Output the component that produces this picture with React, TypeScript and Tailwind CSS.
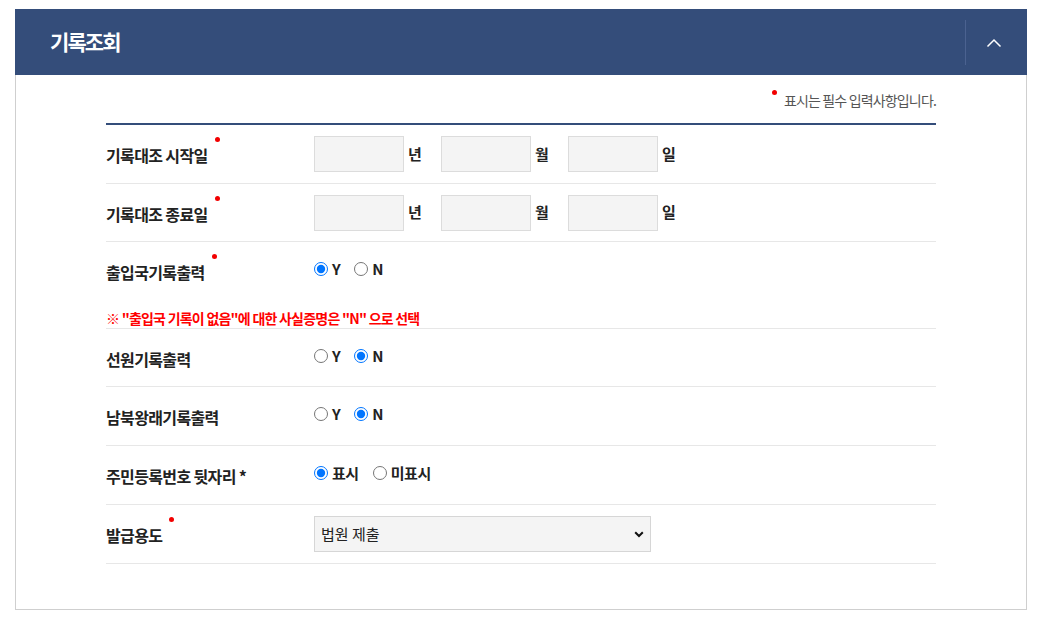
import React from 'react';

const font = { fontFamily: '"Noto Sans CJK KR", "Noto Sans", sans-serif' };

const Dot = ({ className = '' }: { className?: string }) => (
  <span className={`absolute w-[5px] h-[5px] rounded-full bg-[#f20000] ${className}`} />
);

const Label = ({ text, req }: { text: string; req?: boolean }) => (
  <span className="relative text-[16px] leading-[22px] font-bold text-[#222] tracking-[-0.04em]">
    {text}
    {req && <Dot className="-right-[12px] top-[-6px]" />}
  </span>
);

const Row = ({ label, req, h = 'h-[59px]', children }: { label: string; req?: boolean; h?: string; children: React.ReactNode }) => (
  <div className={`flex items-center ${h} border-b border-[#e7e7e7]`}>
    <div className="w-[208px] shrink-0 pt-[2px]">
      <Label text={label} req={req} />
    </div>
    <div className="flex items-center">{children}</div>
  </div>
);

const DateBox = ({ unit }: { unit: string }) => (
  <div className="flex items-center">
    <input className="w-[90px] h-[36px] bg-[#f4f4f4] border border-[#dcdcdc] outline-none" />
    <span className="w-[37px] pl-[4px] text-[15px] font-bold text-[#222]">{unit}</span>
  </div>
);

const Radio = ({ name, label, checked }: { name: string; label: string; checked?: boolean }) => (
  <label className="flex items-center mr-[14px] mb-[4px]">
    <input type="radio" name={name} defaultChecked={checked} className="m-0 w-[14px] h-[14px]" />
    <span className="ml-[4px] text-[15px] font-bold text-[#222] leading-[20px] tracking-[-0.03em]">{label}</span>
  </label>
);

export default function App() {
  return (
    <div className="bg-white min-h-screen pt-[9px] px-[15px]" style={font}>
      <div className="w-[1012px]">
        <div className="flex items-center justify-between h-[66px] bg-[#344d7a]">
          <h1 className="pl-[35px] text-white text-[21px] font-bold tracking-[-0.09em]">기록조회</h1>
          <div className="flex items-center justify-center w-[62px] h-[45px] border-l border-[#4b6290] mt-[11px] mb-[10px] pr-[6px]">
            <svg width="16" height="10" viewBox="0 0 16 10" className="mt-[0px]">
              <polyline points="1.5,8.5 8,2 14.5,8.5" fill="none" stroke="#fff" strokeWidth="1.5" />
            </svg>
          </div>
        </div>

        <div className="border border-t-0 border-[#cfcfcf] px-[90px] pb-[45px]">
          <div className="flex justify-end pt-[15px] pb-[13px]">
            <span className="relative text-[14px] leading-[20px] text-[#555] tracking-[-0.06em]">
              <Dot className="-left-[12px] top-[0px]" />
              표시는 필수 입력사항입니다.
            </span>
          </div>
          <div className="h-[2px] bg-[#344d7a]" />

          <Row label="기록대조 시작일" req>
            <DateBox unit="년" />
            <DateBox unit="월" />
            <DateBox unit="일" />
          </Row>
          <Row label="기록대조 종료일" req h="h-[58px]">
            <DateBox unit="년" />
            <DateBox unit="월" />
            <DateBox unit="일" />
          </Row>

          <div className="border-b border-[#e7e7e7]">
            <div className="flex items-center h-[58px]">
              <div className="w-[208px] shrink-0 pt-[2px]">
                <Label text="출입국기록출력" req />
              </div>
              <div className="flex items-center">
                <Radio name="r1" label="Y" checked />
                <Radio name="r1" label="N" />
              </div>
            </div>
            <div className="h-[28px] pt-[8px] text-[14px] leading-[20px] font-bold text-[#f00] tracking-[-0.055em]">
              ※ "출입국 기록이 없음"에 대한 사실증명은 "N" 으로 선택
            </div>
          </div>

          <Row label="선원기록출력" h="h-[58px]">
            <Radio name="r2" label="Y" />
            <Radio name="r2" label="N" checked />
          </Row>
          <Row label="남북왕래기록출력">
            <Radio name="r3" label="Y" />
            <Radio name="r3" label="N" checked />
          </Row>
          <Row label="주민등록번호 뒷자리 *">
            <Radio name="r4" label="표시" checked />
            <Radio name="r4" label="미표시" />
          </Row>
          <Row label="발급용도" req>
            <div className="relative">
              <select
                defaultValue="court"
                className="appearance-none w-[337px] h-[36px] bg-[#f4f4f4] border border-[#d6d6d6] pl-[6px] text-[15px] text-[#222] outline-none"
              >
                <option value="court">법원 제출</option>
              </select>
              <svg width="10" height="7" viewBox="0 0 10 7" className="absolute right-[7px] top-[15px] pointer-events-none">
                <polyline points="1.2,1.2 5,5 8.8,1.2" fill="none" stroke="#111" strokeWidth="2" />
              </svg>
            </div>
          </Row>
        </div>
      </div>
    </div>
  );
}
